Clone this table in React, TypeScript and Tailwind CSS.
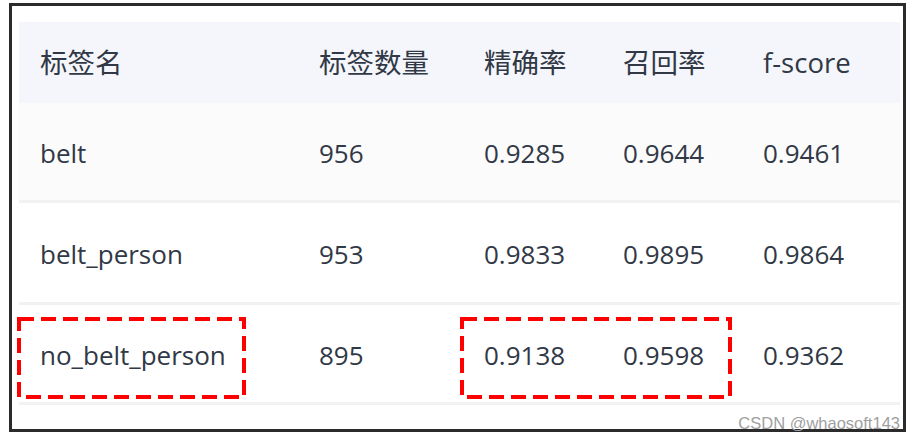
import React from "react";

const rows = [
  ["belt", "956", "0.9285", "0.9644", "0.9461"],
  ["belt_person", "953", "0.9833", "0.9895", "0.9864"],
  ["no_belt_person", "895", "0.9138", "0.9598", "0.9362"],
];

const heads = ["标签名", "标签数量", "精确率", "召回率", "f-score"];

const font = {
  fontFamily: '"Open Sans", "Noto Sans CJK SC", "Noto Sans", sans-serif',
};

function DashBox({ className }: { className: string }) {
  return (
    <svg className={"absolute pointer-events-none " + className} preserveAspectRatio="none">
      <rect
        x="2"
        y="2"
        width="calc(100% - 4px)"
        height="calc(100% - 4px)"
        fill="none"
        stroke="#ff0000"
        strokeWidth="4"
        strokeDasharray="15 7"
      />
    </svg>
  );
}

export default function App() {
  return (
    <div className="w-[916px] h-[439px] bg-white pt-[3px] pl-[9px]" style={font}>
      <div className="relative w-[897px] h-[429px] border-[3px] border-[#2b2b2b] bg-white pt-[16px] pl-[7px] pr-[3px]">
        <div className="grid grid-cols-[279px_165px_139px_140px_1fr] text-[#313846]">
          {heads.map((h) => (
            <div key={h} className="h-[81px] bg-[#f4f6fb] flex items-center pl-[21px] text-[27.5px]">
              {h}
            </div>
          ))}
          {rows.map((r, i) =>
            r.map((c, j) => (
              <div
                key={i + "-" + j}
                className={
                  "flex items-center pl-[21px] pt-[4px] text-[26px] border-b-[3px] border-[#f1f2f4] " +
                  (i === 0 ? "h-[100px] bg-[#fbfbfc]" : i === 1 ? "h-[102px] bg-white" : "h-[100px] bg-white")
                }
              >
                {c}
              </div>
            ))
          )}
        </div>
        <DashBox className="left-[5px] top-[311px] w-[229px] h-[82px]" />
        <DashBox className="left-[448px] top-[311px] w-[272px] h-[82px]" />
        <div
          className="absolute right-[3px] bottom-[-2px] text-[16.5px] leading-none text-[#a0a0a0]"
          style={{ fontFamily: '"Liberation Sans", Arial, sans-serif' }}
        >
          CSDN @whaosoft143
        </div>
      </div>
    </div>
  );
}
